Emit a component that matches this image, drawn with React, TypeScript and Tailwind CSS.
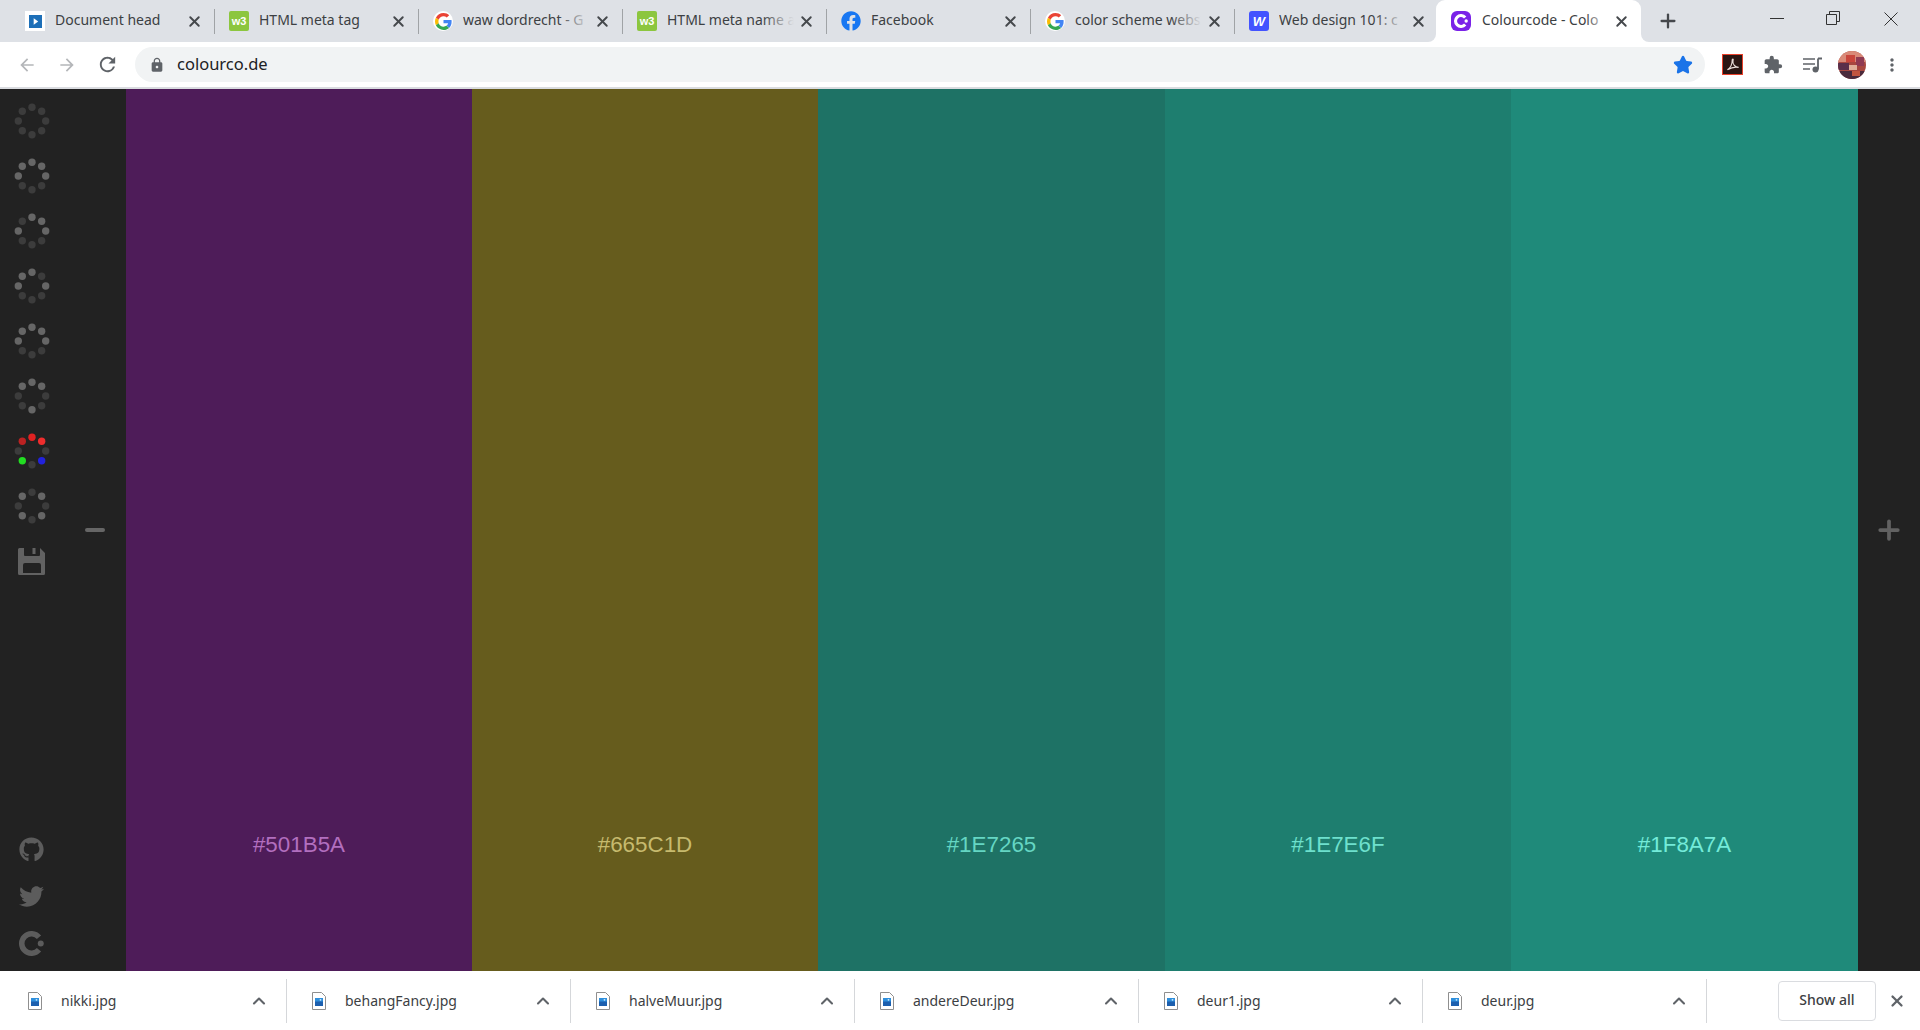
import { ChevronUp, Plus, X, Star } from "lucide-react";
import { FaGithub, FaTwitter, FaFacebook } from "react-icons/fa";
import { MdArrowBack, MdArrowForward, MdExtension, MdLock, MdMoreVert, MdRefresh } from "react-icons/md";

const font = "font-['Noto_Sans','Open_Sans',sans-serif]";

function GoogleIcon() {
  return (
    <span className="w-5 h-5 rounded-full bg-white flex items-center justify-center shrink-0">
      <svg viewBox="0 0 48 48" className="w-[17px] h-[17px]">
        <path fill="#EA4335" d="M24 9.500c3.500 0 6.700 1.300 9.200 3.400l6.900-6.900C35.900 2.200 30.300 0 24 0 14.600 0 6.500 5.400 2.600 13.200l8 6.200C12.400 13.700 17.700 9.500 24 9.500z" />
        <path fill="#4285F4" d="M46.900 24.500c0-1.600-.1-3.100-.4-4.500H24v9h12.900c-.6 3-2.200 5.500-4.700 7.200l7.700 6c4.500-4.200 7-10.300 7-17.700z" />
        <path fill="#FBBC05" d="M10.500 28.600c-.5-1.400-.8-3-.8-4.600s.3-3.200.8-4.600l-8-6.200C.9 16.500 0 20.100 0 24s.9 7.500 2.600 10.800l7.900-6.200z" />
        <path fill="#34A853" d="M24 48c6.500 0 11.900-2.100 15.900-5.800l-7.700-6c-2.200 1.500-5 2.300-8.200 2.300-6.300 0-11.600-4.200-13.500-9.900l-8 6.200C6.500 42.600 14.600 48 24 48z" />
      </svg>
    </span>
  );
}

function W3Icon() {
  return (
    <span className="w-5 h-5 rounded-[2px] bg-[#8cc63f] flex items-center justify-center shrink-0 text-white text-[11px] font-bold leading-none font-['Liberation_Sans',sans-serif]">
      w3
    </span>
  );
}

function DocIcon() {
  return (
    <span className="w-5 h-5 bg-white flex items-center justify-center shrink-0">
      <span className="w-[13px] h-[13px] bg-[#1d6fb8] flex items-center justify-center">
        <svg viewBox="0 0 10 10" className="w-[9px] h-[9px]">
          <path fill="#fff" d="M3 1.500 8 5 3 8.500z" />
        </svg>
      </span>
    </span>
  );
}

function ColourcodeLogo({ fg }: { fg: string }) {
  return (
    <svg viewBox="0 0 20 20" className="w-full h-full block">
      <path fill="none" stroke={fg} strokeWidth="4.400" d="M15.980 5A7.800 7.800 0 1 0 15.980 15" />
      <circle cx="17.400" cy="10" r="2.400" fill={fg} />
    </svg>
  );
}

function SaveIcon() {
  return (
    <svg viewBox="0 0 27 27" className="w-[27px] h-[27px] block">
      <path
        fill="#626262"
        fillRule="evenodd"
        d="M1.500 0H6V7Q6 8 7 8H21Q22 8 22 7V0L27 5V25.500Q27 27 25.500 27H1.500Q0 27 0 25.500V1.500Q0 0 1.500 0ZM7 15Q5 15 5 17V25H23V17Q23 15 21 15Z"
      />
      <rect x="14.500" y="0" width="3" height="6" fill="#626262" />
    </svg>
  );
}

const tabs = [
  { title: "Document head", icon: <DocIcon />, fade: false },
  { title: "HTML meta tag", icon: <W3Icon />, fade: false },
  { title: "waw dordrecht - G", icon: <GoogleIcon />, fade: true },
  { title: "HTML meta name a", icon: <W3Icon />, fade: true },
  { title: "Facebook", icon: <FaFacebook className="w-5 h-5 text-[#1877f2] shrink-0" />, fade: false },
  { title: "color scheme webs", icon: <GoogleIcon />, fade: true },
  {
    title: "Web design 101: c",
    fade: true,
    icon: (
      <span className="w-5 h-5 rounded-[3px] bg-[#4353ff] flex items-center justify-center shrink-0 text-white text-[13px] font-bold italic leading-none font-['Liberation_Sans',sans-serif]">
        W
      </span>
    ),
  },
];

function Tab({ title, icon, fade, last }: { title: string; icon: React.ReactNode; fade: boolean; last: boolean }) {
  return (
    <div className="w-[204px] h-[42px] shrink-0 flex items-center pl-[15px] pr-[11px] relative">
      {icon}
      <div className="ml-[10px] flex-1 overflow-hidden whitespace-nowrap text-[14px] leading-[20px] pb-[2px] text-[#3c4043] relative">
        {title}
        {fade && <span className="absolute right-0 top-0 bottom-0 w-8 bg-gradient-to-r from-transparent to-[#dee1e6]" />}
      </div>
      <X className="ml-1 w-[17px] h-[17px] text-[#45484c] shrink-0" strokeWidth={2.7} />
      {!last && <span className="absolute -right-px top-[9px] h-[25px] w-px bg-[#a0a3a6]" />}
    </div>
  );
}

// which of the 8 dots are lit, clockwise from the top
const spinners = [
  [0, 0, 0, 0, 0, 0, 0, 0],
  [1, 1, 1, 0, 0, 0, 1, 1],
  [1, 1, 1, 0, 0, 0, 1, 0],
  [1, 0, 1, 0, 0, 0, 1, 1],
  [1, 1, 1, 0, 0, 0, 1, 1],
  [1, 1, 0, 0, 1, 0, 0, 1],
];

function Spinner({ lit, colors }: { lit?: number[]; colors?: string[] }) {
  return (
    <svg viewBox="0 0 40 40" className="w-10 h-10 block">
      {Array.from({ length: 8 }).map((_, i) => {
        const a = (i / 8) * Math.PI * 2;
        const fill = colors ? colors[i] : lit && lit[i] ? "#666666" : "#3c3c3c";
        return <circle key={i} cx={20 + Math.sin(a) * 13.7} cy={20 - Math.cos(a) * 13.7} r="3.700" fill={fill} />;
      })}
    </svg>
  );
}

const swatches = [
  { hex: "#501B5A", bg: "bg-[#4e1c59]", text: "text-[#b26fbf]", w: "w-[346px]" },
  { hex: "#665C1D", bg: "bg-[#665c1d]", text: "text-[#c6ba6e]", w: "w-[346px]" },
  { hex: "#1E7265", bg: "bg-[#1e7265]", text: "text-[#65d6c3]", w: "w-[347px]" },
  { hex: "#1E7E6F", bg: "bg-[#1e7e6f]", text: "text-[#6ee0cd]", w: "w-[346px]" },
  { hex: "#1F8A7A", bg: "bg-[#1f8a7a]", text: "text-[#74ebd9]", w: "w-[347px]" },
];

const downloads = ["nikki.jpg", "behangFancy.jpg", "halveMuur.jpg", "andereDeur.jpg", "deur1.jpg", "deur.jpg"];

function FileIcon() {
  return (
    <svg viewBox="0 0 14 18" className="w-[14px] h-[18px] shrink-0">
      <path d="M.5.500h9l4 4v13H.5z" fill="#fff" stroke="#8f8f8f" strokeWidth="1" />
      <rect x="3" y="6" width="8" height="8" fill="#1c5fae" />
      <rect x="3" y="6" width="8" height="3.500" fill="#2f8fdc" />
      <circle cx="8.500" cy="7.800" r=".9" fill="#cfeaff" />
    </svg>
  );
}

function Avatar() {
  return (
    <span className="ml-[16px] w-[28px] h-[28px] rounded-full overflow-hidden shrink-0 block">
      <svg viewBox="0 0 28 28" className="w-full h-full block">
        <rect width="28" height="28" fill="#a8473f" />
        <rect width="28" height="11" fill="#d98a78" />
        <rect x="8" y="4" width="9" height="7" fill="#c9463c" />
        <rect x="18" y="6" width="8" height="9" fill="#8f3a52" />
        <rect y="12" width="11" height="7" fill="#5a2f4a" />
        <rect x="11" y="14" width="8" height="5" fill="#e0b09a" />
        <rect y="20" width="28" height="8" fill="#4a2a3c" />
        <rect x="14" y="20" width="8" height="5" fill="#c2553f" />
      </svg>
    </span>
  );
}

export default function App() {
  return (
    <div className={`w-[1920px] h-[1030px] flex flex-col overflow-hidden bg-white ${font}`}>
      {/* tab strip */}
      <div className="h-[42px] bg-[#dee1e6] flex items-start shrink-0 pl-[10px]">
        {tabs.map((t, i) => (
          <Tab key={t.title} title={t.title} icon={t.icon} fade={t.fade} last={i === tabs.length - 1} />
        ))}
        <div className="w-[205px] h-[42px] -ml-[2px] bg-white rounded-t-[9px] shrink-0 flex items-center pl-[15px] pr-[11px] relative z-10">
          <span className="absolute -left-2 bottom-0 w-2 h-2 bg-white">
            <span className="block w-2 h-2 bg-[#dee1e6] rounded-br-[8px]" />
          </span>
          <span className="absolute -right-2 bottom-0 w-2 h-2 bg-white">
            <span className="block w-2 h-2 bg-[#dee1e6] rounded-bl-[8px]" />
          </span>
          <span className="w-5 h-5 rounded-[6px] bg-[#7a22e8] shrink-0 block p-[3px]">
            <ColourcodeLogo fg="#fff" />
          </span>
          <div className="ml-[11px] flex-1 overflow-hidden whitespace-nowrap text-[14px] leading-[20px] pb-[2px] text-[#3c4043] relative">
            Colourcode - Colo
            <span className="absolute right-0 top-0 bottom-0 w-6 bg-gradient-to-r from-transparent to-white" />
          </div>
          <X className="ml-1 w-[17px] h-[17px] text-[#45484c] shrink-0" strokeWidth={2.7} />
        </div>
        <Plus className="ml-[16px] mt-[10px] w-[22px] h-[22px] text-[#45484c] shrink-0" strokeWidth={2.5} />
        <div className="ml-auto flex items-center h-9 shrink-0 pr-[22px] gap-[42px]">
          <svg viewBox="0 0 14 14" className="w-[14px] h-[14px]">
            <path d="M0 7.500h14" stroke="#333" strokeWidth="1" />
          </svg>
          <svg viewBox="0 0 14 14" className="w-[14px] h-[14px]">
            <path d="M.5 3.500h10v10H.5zM3.500 3.500v-3h10v10h-3" fill="none" stroke="#333" strokeWidth="1" />
          </svg>
          <svg viewBox="0 0 14 14" className="w-[14px] h-[14px] ml-[2px] mt-[2px]">
            <path d="M.5.500l13 13M13.500.500l-13 13" stroke="#333" strokeWidth="1" />
          </svg>
        </div>
      </div>

      {/* toolbar */}
      <div className="h-[47px] bg-white border-b-2 border-[#dadce0] shrink-0 flex items-center pl-[17px]">
        <MdArrowBack className="w-[20px] h-[20px] text-[#b4b6b9] shrink-0" />
        <MdArrowForward className="ml-[20px] w-[20px] h-[20px] text-[#b4b6b9] shrink-0" />
        <MdRefresh className="ml-[19px] w-[23px] h-[23px] text-[#5f6368] shrink-0" />
        <div className="ml-[16px] w-[1570px] h-[35px] rounded-full bg-[#f1f3f4] flex items-center pl-[14px] pr-[12px] shrink-0">
          <MdLock className="w-[16px] h-[16px] text-[#5f6368]" />
          <span className="ml-[12px] text-[16.500px] text-[#202124]">colourco.de</span>
          <Star className="ml-auto w-5 h-5 text-[#1a73e8] fill-[#1a73e8]" />
        </div>
        <span className="ml-[17px] w-[21px] h-[21px] bg-[#2a1512] border border-[#e8402a] flex items-center justify-center shrink-0">
          <svg viewBox="0 0 20 20" className="w-[16px] h-[16px]">
            <path d="M3 16c3-2 6-7 6-12 0-2 2-2 1 1-1 4 3 8 7 8-4-1-9 0-14 3z" fill="none" stroke="#e8dcd8" strokeWidth="1.400" />
          </svg>
        </span>
        <MdExtension className="ml-[20px] w-5 h-5 text-[#5f6368] shrink-0" />
        <svg viewBox="0 0 19 16" className="ml-[20px] w-[19px] h-4 shrink-0">
          <path d="M0 2h12M0 7h12M0 12h7" stroke="#5f6368" strokeWidth="1.600" />
          <path d="M15 1.500v11M15 1.500h4" stroke="#5f6368" strokeWidth="1.800" />
          <circle cx="12.500" cy="12.500" r="3" fill="#5f6368" />
        </svg>
        <Avatar />
        <MdMoreVert className="ml-[16px] w-5 h-5 text-[#5f6368] shrink-0" />
      </div>

      {/* palette */}
      <div className="h-[882px] flex shrink-0 bg-[#222222] text-[#626262]">
        <aside className="w-[63px] shrink-0 flex flex-col items-center pt-[12px] pb-[15px]">
          <div className="flex flex-col gap-[15px]">
            {spinners.map((lit, i) => (
              <Spinner key={i} lit={lit} />
            ))}
            <Spinner colors={["#e02222", "#ee2d2d", "#3c3c3c", "#2222dd", "#3c3c3c", "#22dd22", "#3c3c3c", "#bb2222"]} />
            <Spinner lit={[0, 1, 0, 1, 0, 1, 0, 1]} />
            <div className="w-10 h-10 flex items-center justify-center">
              <SaveIcon />
            </div>
          </div>
          <div className="mt-auto flex flex-col items-center gap-[22px]">
            <FaGithub className="w-[25px] h-[25px] text-[#5c5c5c]" />
            <FaTwitter className="w-[25px] h-[25px] text-[#5c5c5c]" />
            <span className="w-[25px] h-[25px] block">
              <ColourcodeLogo fg="#5c5c5c" />
            </span>
          </div>
        </aside>
        <div className="w-[63px] shrink-0 flex items-center justify-center">
          <span className="w-5 h-1 rounded-full bg-[#666666]" />
        </div>
        {swatches.map((s) => (
          <div key={s.hex} className={`${s.w} ${s.bg} shrink-0 flex flex-col items-center justify-end pb-[112px]`}>
            <span className={`text-[22.400px] leading-[28px] ${s.text} font-['Liberation_Sans',Arial,sans-serif]`}>{s.hex}</span>
          </div>
        ))}
        <div className="flex-1 flex items-center justify-center">
          <Plus className="w-[30px] h-[30px]" strokeWidth={3} />
        </div>
      </div>

      {/* downloads bar */}
      <div className="flex-1 flex items-center bg-white pl-[3px]">
        {downloads.map((name) => (
          <div key={name} className="w-[284px] h-[44px] shrink-0 flex items-center pl-[25px] pr-[17px] border-r border-[#d5d7da]">
            <FileIcon />
            <span className="ml-[19px] text-[14px] text-[#3c4043]">{name}</span>
            <ChevronUp className="ml-auto w-5 h-5 text-[#5f6368]" strokeWidth={2.5} />
          </div>
        ))}
        <button className="ml-[71px] w-[98px] h-[40px] rounded-[4px] border border-[#dadce0] bg-white text-[14px] font-medium text-[#3c4043] pb-[2px]">
          Show all
        </button>
        <X className="ml-[12px] w-[18px] h-[18px] text-[#5f6368] shrink-0" strokeWidth={3} />
      </div>
    </div>
  );
}
